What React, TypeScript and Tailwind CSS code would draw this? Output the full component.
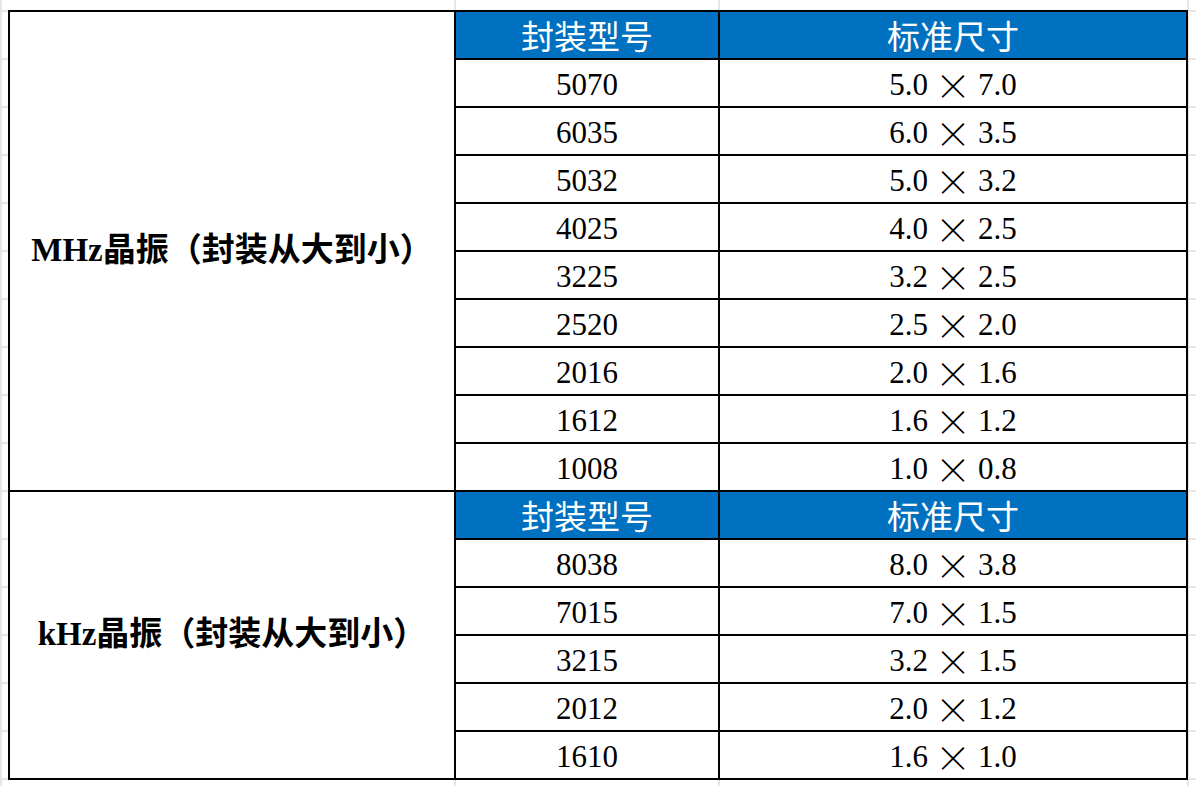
import React from "react";

const mhz: [string, string, string][] = [
  ["5070", "5.0", "7.0"],
  ["6035", "6.0", "3.5"],
  ["5032", "5.0", "3.2"],
  ["4025", "4.0", "2.5"],
  ["3225", "3.2", "2.5"],
  ["2520", "2.5", "2.0"],
  ["2016", "2.0", "1.6"],
  ["1612", "1.6", "1.2"],
  ["1008", "1.0", "0.8"],
];

const khz: [string, string, string][] = [
  ["8038", "8.0", "3.8"],
  ["7015", "7.0", "1.5"],
  ["3215", "3.2", "1.5"],
  ["2012", "2.0", "1.2"],
  ["1610", "1.6", "1.0"],
];

function HeaderRow() {
  return (
    <div className="flex h-[48px] border-b-2 border-black bg-[#0070c0] text-white">
      <div className="flex w-[264px] items-center justify-center border-r-2 border-black font-['Noto_Sans_CJK_SC',sans-serif] text-[33px] leading-none">
        封装型号
      </div>
      <div className="flex flex-1 items-center justify-center font-['Noto_Sans_CJK_SC',sans-serif] text-[33px] leading-none">
        标准尺寸
      </div>
    </div>
  );
}

function DataRow({ code, a, b }: { code: string; a: string; b: string }) {
  return (
    <div className="flex h-[48px] border-b-2 border-black bg-white text-black">
      <div className="flex w-[264px] items-center justify-center border-r-2 border-black pt-[2px] font-['Liberation_Serif',serif] text-[31px] leading-none">
        {code}
      </div>
      <div className="flex flex-1 items-center justify-center pt-[2px] font-['Liberation_Serif',serif] text-[31px] leading-none whitespace-pre">
        <span>{a}</span>
        <span className="inline-block w-[50px] text-center font-['Noto_Sans_CJK_SC',sans-serif] text-[36px] font-light leading-none">
          ×
        </span>
        <span>{b}</span>
      </div>
    </div>
  );
}

function Section({ label, rows }: { label: string; rows: [string, string, string][] }) {
  return (
    <div className="flex">
      <div className="flex w-[446px] items-center justify-center border-r-2 border-b-2 border-black bg-white font-['Liberation_Serif','Noto_Sans_CJK_SC',serif] text-[33px] font-bold text-black">
        {label}
      </div>
      <div className="flex flex-1 flex-col">
        <HeaderRow />
        {rows.map((r) => (
          <DataRow key={r[0]} code={r[0]} a={r[1]} b={r[2]} />
        ))}
      </div>
    </div>
  );
}

export default function App() {
  return (
    <div className="h-[786px] w-[1196px] overflow-hidden bg-white bg-[image:linear-gradient(to_right,#e6e6e6_0_2px,transparent_2px_454px,#e6e6e6_454px_456px,transparent_456px_718px,#e6e6e6_718px_720px,transparent_720px_1187px,#e6e6e6_1187px_1189px,transparent_1189px),repeating-linear-gradient(to_bottom,transparent_0_10px,#e6e6e6_10px_12px,transparent_12px_48px)] pl-[8px] pt-[10px]">
      <div className="flex w-[1180px] flex-col border-x-2 border-t-2 border-black">
        <Section label="MHz晶振（封装从大到小）" rows={mhz} />
        <Section label="kHz晶振（封装从大到小）" rows={khz} />
      </div>
    </div>
  );
}
